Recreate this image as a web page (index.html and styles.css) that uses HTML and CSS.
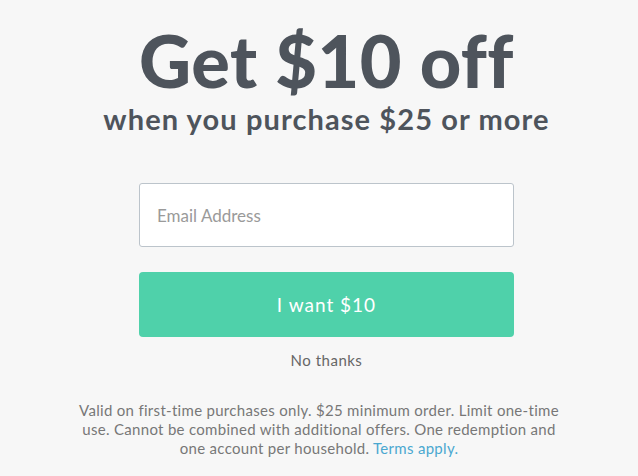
FILE: index.html
```html
<!DOCTYPE html>
<html lang="en">
<head>
    <meta charset="UTF-8">
    <meta name="viewport" content="width=device-width, initial-scale=1.0">
    <title>Get $10 off</title>
    <link rel="stylesheet" href="styles.css">
</head>
<body>
    <div class="offer">
        <h1 class="title">Get $10 off</h1>
        <h2 class="subtitle">when you purchase $25 or more</h2>

        <form class="signup">
            <input type="email" class="email" placeholder="Email Address">
            <button type="button" class="submit">I want $10</button>
        </form>

        <a class="decline" href="#">No thanks</a>

        <p class="terms">
            Valid on first-time purchases only. $25 minimum order. Limit one-time
            use. Cannot be combined with additional offers. One redemption and
            one account per household. <a href="#">Terms apply.</a>
        </p>
    </div>
</body>
</html>
```

FILE: styles.css
```css
body {
    font-family: Lato, "Open Sans", Arial, sans-serif;
    background-color: #f7f7f7;
    margin: 0;
    padding: 0;
}

.offer {
    display: flex;
    flex-direction: column;
    align-items: center;
    padding: 18px 0 0 15px;
}

.title {
    margin: 0;
    font-size: 72px;
    line-height: 84px;
    font-weight: 900;
    color: #4e545c;
    letter-spacing: 0.5px;
}

.subtitle {
    margin: 0;
    font-size: 29px;
    line-height: 34px;
    font-weight: 700;
    color: #4e545c;
    letter-spacing: 1.1px;
}

.signup {
    display: flex;
    flex-direction: column;
    gap: 25px;
    width: 375px;
    margin-top: 47px;
}

.email {
    height: 64px;
    padding: 0 17px;
    border: 1px solid #bcc4cb;
    border-radius: 3px;
    background: #fff;
    font-family: inherit;
    font-size: 17px;
    color: #333;
    box-sizing: border-box;
}

.email::placeholder {
    color: #9a9a9a;
}

.submit {
    height: 65px;
    border: none;
    border-radius: 4px;
    background-color: #4fd1aa;
    color: #fff;
    font-family: inherit;
    font-size: 19px;
    letter-spacing: 1px;
    cursor: pointer;
}

.decline {
    margin-top: 14px;
    font-size: 15px;
    color: #666;
    text-decoration: none;
    letter-spacing: 0.5px;
}

.terms {
    width: 500px;
    margin: 32px 0 0 -15px;
    text-align: center;
    font-size: 15px;
    line-height: 19px;
    color: #777;
    letter-spacing: 0.3px;
}

.terms a {
    color: #4aa8d0;
    text-decoration: none;
}
```
